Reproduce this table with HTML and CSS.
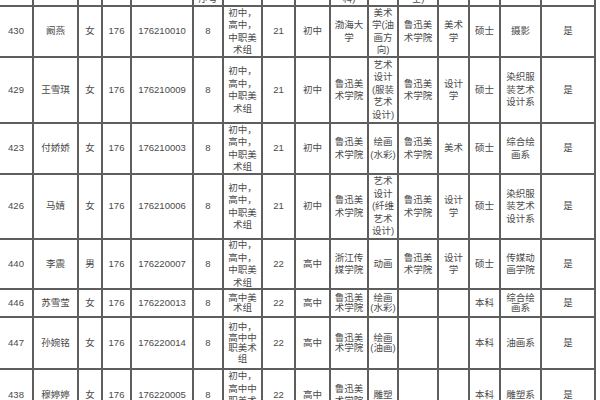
FILE: index.html
```html
<!DOCTYPE html>
<html lang="zh">
<head>
<meta charset="utf-8">
<title>表格</title>
<link rel="stylesheet" href="styles.css">
</head>
<body>
<div class="sheet">
  <div class="row head">
    <div class="c"></div><div class="c"></div><div class="c"></div><div class="c"></div><div class="c"></div>
    <div class="c">岗位<br>序号</div><div class="c"></div><div class="c"></div><div class="c"></div>
    <div class="c">毕业院<br>校(本<br>科)</div><div class="c"></div><div class="c">研究生<br>院校(硕<br>士)</div>
    <div class="c"></div><div class="c"></div><div class="c"></div><div class="c"></div>
  </div>
  <div class="row">
    <div class="c">430</div><div class="c">阚燕</div><div class="c">女</div><div class="c">176</div><div class="c">176210010</div><div class="c">8</div>
    <div class="c">初中，<br>高中，<br>中职美<br>术组</div><div class="c">21</div><div class="c">初中</div>
    <div class="c">渤海大<br>学</div><div class="c">美术<br>学(油<br>画方<br>向)</div><div class="c">鲁迅美<br>术学院</div>
    <div class="c">美术<br>学</div><div class="c">硕士</div><div class="c">摄影</div><div class="c">是</div>
  </div>
  <div class="row">
    <div class="c">429</div><div class="c">王雪琪</div><div class="c">女</div><div class="c">176</div><div class="c">176210009</div><div class="c">8</div>
    <div class="c">初中，<br>高中，<br>中职美<br>术组</div><div class="c">21</div><div class="c">初中</div>
    <div class="c">鲁迅美<br>术学院</div><div class="c">艺术<br>设计<br>(服装<br>艺术<br>设计)</div><div class="c">鲁迅美<br>术学院</div>
    <div class="c">设计<br>学</div><div class="c">硕士</div><div class="c">染织服<br>装艺术<br>设计系</div><div class="c">是</div>
  </div>
  <div class="row">
    <div class="c">423</div><div class="c">付娇娇</div><div class="c">女</div><div class="c">176</div><div class="c">176210003</div><div class="c">8</div>
    <div class="c">初中，<br>高中，<br>中职美<br>术组</div><div class="c">21</div><div class="c">初中</div>
    <div class="c">鲁迅美<br>术学院</div><div class="c">绘画<br>(水彩)</div><div class="c">鲁迅美<br>术学院</div>
    <div class="c">美术</div><div class="c">硕士</div><div class="c">综合绘<br>画系</div><div class="c">是</div>
  </div>
  <div class="row">
    <div class="c">426</div><div class="c">马婧</div><div class="c">女</div><div class="c">176</div><div class="c">176210006</div><div class="c">8</div>
    <div class="c">初中，<br>高中，<br>中职美<br>术组</div><div class="c">21</div><div class="c">初中</div>
    <div class="c">鲁迅美<br>术学院</div><div class="c">艺术<br>设计<br>(纤维<br>艺术<br>设计)</div><div class="c">鲁迅美<br>术学院</div>
    <div class="c">设计<br>学</div><div class="c">硕士</div><div class="c">染织服<br>装艺术<br>设计系</div><div class="c">是</div>
  </div>
  <div class="row">
    <div class="c">440</div><div class="c">李震</div><div class="c">男</div><div class="c">176</div><div class="c">176220007</div><div class="c">8</div>
    <div class="c">初中，<br>高中，<br>中职美<br>术组</div><div class="c">22</div><div class="c">高中</div>
    <div class="c">浙江传<br>媒学院</div><div class="c">动画</div><div class="c">鲁迅美<br>术学院</div>
    <div class="c">设计<br>学</div><div class="c">硕士</div><div class="c">传媒动<br>画学院</div><div class="c">是</div>
  </div>
  <div class="row tight">
    <div class="c">446</div><div class="c">苏雪莹</div><div class="c">女</div><div class="c">176</div><div class="c">176220013</div><div class="c">8</div>
    <div class="c">高中美<br>术组</div><div class="c">22</div><div class="c">高中</div>
    <div class="c">鲁迅美<br>术学院</div><div class="c">绘画<br>(水彩)</div><div class="c"></div>
    <div class="c"></div><div class="c">本科</div><div class="c">综合绘<br>画系</div><div class="c">是</div>
  </div>
  <div class="row tight">
    <div class="c">447</div><div class="c">孙婉铭</div><div class="c">女</div><div class="c">176</div><div class="c">176220014</div><div class="c">8</div>
    <div class="c">初中，<br>高中中<br>职美术<br>组</div><div class="c">22</div><div class="c">高中</div>
    <div class="c">鲁迅美<br>术学院</div><div class="c">绘画<br>(油画)</div><div class="c"></div>
    <div class="c"></div><div class="c">本科</div><div class="c">油画系</div><div class="c">是</div>
  </div>
  <div class="row">
    <div class="c">438</div><div class="c">穆婷婷</div><div class="c">女</div><div class="c">176</div><div class="c">176220005</div><div class="c">8</div>
    <div class="c">初中，<br>高中中<br>职美术<br>组</div><div class="c">22</div><div class="c">高中</div>
    <div class="c">鲁迅美<br>术学院</div><div class="c">雕塑</div><div class="c"></div>
    <div class="c"></div><div class="c">本科</div><div class="c">雕塑系</div><div class="c">是</div>
  </div>
</div>
</body>
</html>
```
FILE: styles.css
```css
html, body {
  margin: 0;
  padding: 0;
  background: #ffffff;
  overflow: hidden;
  width: 600px;
  height: 400px;
}

.sheet {
  display: grid;
  width: max-content;
  margin: -27px 0 0 -2px;
  padding: 2px;
  gap: 2px;
  background: #5e5e5e;
  grid-template-columns: 32px 43px 22px 27px 60px 28px 37px 31px 33px 36px 28px 38px 29px 29px 39px 52px;
  grid-template-rows: 30px 49px 64px 49px 63px 48px 26px 50px 50px;
  font-family: "Liberation Sans", "Noto Sans CJK SC", sans-serif;
  font-size: 9.5px;
  line-height: 12.5px;
  color: #4a4a4a;
}

.row {
  display: contents;
}

.row.tight {
  line-height: 10.5px;
}

.row.head .c {
  align-items: flex-end;
  padding-bottom: 0;
}

.c {
  background: #ffffff;
  display: flex;
  align-items: center;
  justify-content: center;
  text-align: center;
  white-space: nowrap;
  overflow: hidden;
}
```
